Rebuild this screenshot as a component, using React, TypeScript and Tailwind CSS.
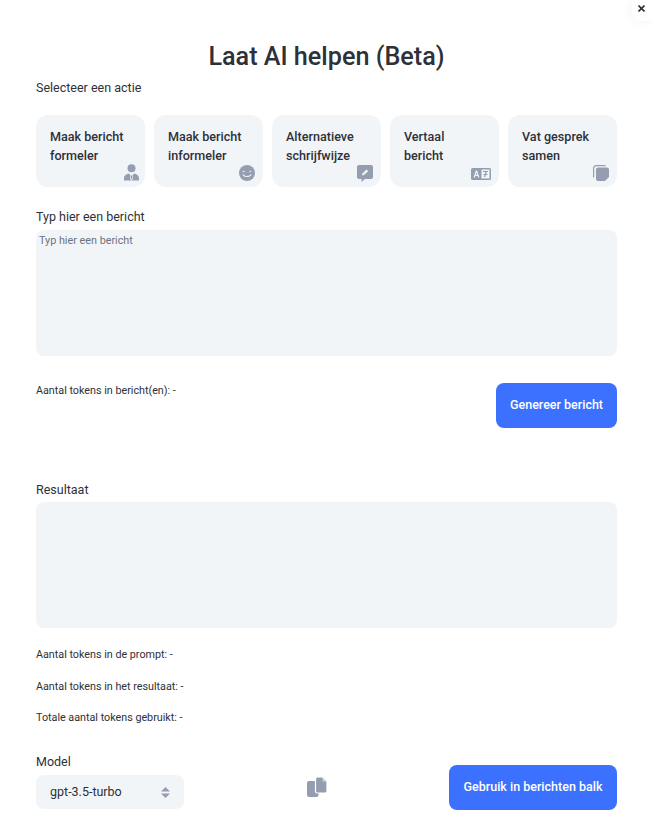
import { ReactNode } from 'react';

const PersonIcon = () => (
  <svg width="15" height="17" viewBox="0 0 15 17" fill="#959db1">
    <circle cx="7.500" cy="4.200" r="4" />
    <path d="M0 16.500v-2.800C0 11.400 2.500 10 5 9.500l1.200 1.500h2.600L10 9.500c2.500.5 5 1.900 5 4.200v2.800z" />
    <path d="M6.700 9.800h1.600l.6 5.200-1.400 1.500-1.400-1.500z" fill="#f2f5f8" />
    <path d="M7.100 11.500h.8l.3 3-.7.800-.7-.8z" fill="#959db1" />
  </svg>
);

const SmileIcon = () => (
  <svg width="16" height="16" viewBox="0 0 16 16">
    <circle cx="8" cy="8" r="8" fill="#959db1" />
    <path d="M3.700 6.800c.5-.8 1.600-.8 2.100 0M10.200 6.800c.5-.8 1.600-.8 2.100 0" stroke="#f2f5f8" strokeWidth="1" fill="none" strokeLinecap="round" />
    <path d="M4.200 9.800c1.800 2.300 5.800 2.300 7.600 0" stroke="#f2f5f8" strokeWidth="1.100" fill="none" strokeLinecap="round" />
  </svg>
);

const EditBubbleIcon = () => (
  <svg width="16" height="17" viewBox="0 0 16 17">
    <path d="M2 0h12a2 2 0 0 1 2 2v10a2 2 0 0 1-2 2H8l-3.500 3v-3H2a2 2 0 0 1-2-2V2a2 2 0 0 1 2-2z" fill="#959db1" />
    <path d="M5 10.500l.5-2L9.500 4.500 11.200 6.200 7 10z" fill="#f2f5f8" />
  </svg>
);

const TranslateIcon = () => (
  <svg width="20" height="12" viewBox="0 0 20 12">
    <rect width="20" height="12" rx="1.500" fill="#959db1" />
    <path d="M2.600 9.400L4.900 2.600h1.200l2.300 6.800H7l-.4-1.400H4.400L4 9.400zM4.800 6.900h1.400L5.500 4.500z" fill="#f2f5f8" />
    <rect x="10.500" y="1.500" width="8" height="9" fill="#f2f5f8" />
    <path d="M12 3h5v1.100h-1.300L14.200 9h-1.300l1.500-4.900H12zM12.500 6h4v1h-4z" fill="#959db1" />
  </svg>
);

const StackIcon = () => (
  <svg width="16" height="16" viewBox="0 0 16 16">
    <path d="M12.500.6H3.500A2.900 2.900 0 0 0 .6 3.500v9" stroke="#959db1" strokeWidth="1.200" fill="none" />
    <path d="M5 2.500h9a2 2 0 0 1 2 2v7.500L12 16H5a2 2 0 0 1-2-2V4.500a2 2 0 0 1 2-2z" fill="#959db1" />
  </svg>
);

const CopyIcon = () => (
  <svg width="20" height="20" viewBox="0 0 20 20" fill="#959db1">
    <rect x="0" y="4" width="11.500" height="16" rx="2" />
    <path
      d="M8.500 1.800A1.800 1.800 0 0 1 10.300 0H15.500L20 4.500v9.700a1.800 1.800 0 0 1-1.800 1.800h-7.900a1.800 1.800 0 0 1-1.800-1.800z"
      stroke="#ffffff"
      strokeWidth="1.200"
    />
    <path d="M15.500 .6v3.900h3.900z" fill="#c9cfdb" />
  </svg>
);

const actions: { lines: string[]; icon: ReactNode; iconClass: string }[] = [
  { lines: ['Maak bericht', 'formeler'], icon: <PersonIcon />, iconClass: 'bottom-[6px] right-[6px]' },
  { lines: ['Maak bericht', 'informeler'], icon: <SmileIcon />, iconClass: 'bottom-[6px] right-[8px]' },
  { lines: ['Alternatieve', 'schrijfwijze'], icon: <EditBubbleIcon />, iconClass: 'bottom-[5px] right-[8px]' },
  { lines: ['Vertaal', 'bericht'], icon: <TranslateIcon />, iconClass: 'bottom-[7px] right-[8px]' },
  { lines: ['Vat gesprek', 'samen'], icon: <StackIcon />, iconClass: 'bottom-[6px] right-[8px]' },
];

const App = () => {
  return (
    <div
      className="relative h-[827px] w-[651px] overflow-hidden bg-white pl-9 pr-[34px] text-[#2e3138]"
      style={{ fontFamily: 'Roboto, sans-serif' }}
    >
      <div className="absolute right-0 top-0 flex h-[21px] w-[19px] items-center justify-center rounded-bl-lg bg-white pb-[5px] shadow-[0_0_12px_rgba(0,0,0,0.06)]">
        <svg width="7" height="7" viewBox="0 0 7 7" stroke="#2e3138" strokeWidth="1.600">
          <path d="M.5.500l6 6M6.500.500l-6 6" />
        </svg>
      </div>

      <h1 className="pt-[41px] text-center text-[25.200px] leading-[32px] font-medium">Laat AI helpen (Beta)</h1>
      <p className="mt-[7px] text-[12.500px] leading-[16px]">Selecteer een actie</p>

      <div className="mt-[19px] flex gap-[9px]">
        {actions.map((action) => (
          <div
            key={action.lines[0] + action.lines[1]}
            className="relative h-[72px] w-[109px] shrink-0 rounded-xl bg-[#f2f5f8] pl-[14px] pt-[12px] text-[12.600px] leading-[19px] font-medium"
          >
            {action.lines.map((line) => (
              <div key={line}>{line}</div>
            ))}
            <div className={`absolute ${action.iconClass}`}>{action.icon}</div>
          </div>
        ))}
      </div>

      <p className="mt-[22px] text-[12.500px] leading-[16px]">Typ hier een bericht</p>
      <div className="mt-[5px] h-[126px] rounded-lg bg-[#f2f5f8] px-[3px] pt-[4px] text-[10.800px] leading-[14px] text-[#6b7280]">
        Typ hier een bericht
      </div>

      <div className="mt-[27px] flex items-start justify-between">
        <p className="pt-[1px] text-[10.750px] leading-[14px]">Aantal tokens in bericht(en): -</p>
        <button className="flex h-[45px] w-[121px] items-center justify-center rounded-lg bg-[#3b71fe] text-[12.500px] font-medium text-white">
          Genereer bericht
        </button>
      </div>

      <p className="mt-[54px] text-[12.500px] leading-[16px]">Resultaat</p>
      <div className="mt-[4px] h-[126px] rounded-lg bg-[#f2f5f8]" />

      <div className="mt-[20px] flex flex-col gap-[17.500px] text-[10.750px] leading-[14px]">
        <p>Aantal tokens in de prompt: -</p>
        <p>Aantal tokens in het resultaat: -</p>
        <p>Totale aantal tokens gebruikt: -</p>
      </div>

      <div className="mt-[29px] flex items-end">
        <div className="mb-[1px] w-[148px]">
          <p className="text-[12.500px] leading-[16px]">Model</p>
          <div className="mt-[5px] flex h-[34px] items-center justify-between rounded-lg bg-[#f2f5f8] pl-[14px] pr-[14px] text-[12.500px]">
            gpt-3.5-turbo
            <svg width="9" height="11" viewBox="0 0 9 11" fill="#959db1">
              <path d="M4.500 0L9 4.500H0zM0 6.500h9L4.500 11z" />
            </svg>
          </div>
        </div>
        <div className="mb-[13px] ml-[123px]">
          <CopyIcon />
        </div>
        <button className="ml-auto flex h-[45px] w-[168px] items-center justify-center rounded-lg bg-[#3b71fe] text-[12.500px] font-medium text-white">
          Gebruik in berichten balk
        </button>
      </div>
    </div>
  );
};

export default App;
